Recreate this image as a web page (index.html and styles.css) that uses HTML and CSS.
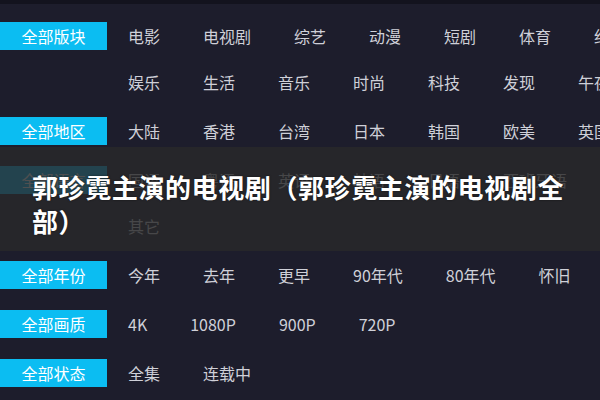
FILE: index.html
```html
<!DOCTYPE html>
<html lang="zh-CN">
<head>
<meta charset="utf-8">
<title>郭珍霓主演的电视剧</title>
<link rel="stylesheet" href="styles.css">
</head>
<body>
<div class="page">
  <div class="filters">
    <div class="group">
      <div class="label">全部版块</div>
      <div class="items">
        <div class="line"><span class="item">电影</span><span class="item">电视剧</span><span class="item">综艺</span><span class="item">动漫</span><span class="item">短剧</span><span class="item">体育</span><span class="item">纪录</span></div>
        <div class="line"><span class="item">娱乐</span><span class="item">生活</span><span class="item">音乐</span><span class="item">时尚</span><span class="item">科技</span><span class="item">发现</span><span class="item">午夜</span></div>
      </div>
    </div>
    <div class="group">
      <div class="label">全部地区</div>
      <div class="items">
        <div class="line"><span class="item">大陆</span><span class="item">香港</span><span class="item">台湾</span><span class="item">日本</span><span class="item">韩国</span><span class="item">欧美</span><span class="item">英国</span></div>
      </div>
    </div>
    <div class="group">
      <div class="label">全部语言</div>
      <div class="items">
        <div class="line"><span class="item">国语</span><span class="item">粤语</span><span class="item">英语</span><span class="item">韩语</span><span class="item">日语</span><span class="item">西班牙语</span></div>
        <div class="line"><span class="item">其它</span></div>
      </div>
    </div>
    <div class="group">
      <div class="label">全部年份</div>
      <div class="items">
        <div class="line"><span class="item">今年</span><span class="item">去年</span><span class="item">更早</span><span class="item">90年代</span><span class="item">80年代</span><span class="item">怀旧</span></div>
      </div>
    </div>
    <div class="group">
      <div class="label">全部画质</div>
      <div class="items">
        <div class="line"><span class="item">4K</span><span class="item">1080P</span><span class="item">900P</span><span class="item">720P</span></div>
      </div>
    </div>
    <div class="group">
      <div class="label">全部状态</div>
      <div class="items">
        <div class="line"><span class="item">全集</span><span class="item">连载中</span></div>
      </div>
    </div>
  </div>
  <div class="banner">
    <h1 class="title">郭珍霓主演的电视剧（郭珍霓主演的电视剧全部）</h1>
  </div>
</div>
</body>
</html>
```

FILE: styles.css
```css
* { box-sizing: border-box; }
html, body {
  margin: 0;
  padding: 0;
  width: 600px;
  height: 400px;
  overflow: hidden;
  background: #1d1d2c;
  font-family: "Noto Sans CJK SC", "Noto Sans", sans-serif;
}
.page {
  position: relative;
  width: 600px;
  height: 400px;
  border-top: 4px solid #13131e;
  overflow: hidden;
}
.filters {
  display: flex;
  flex-direction: column;
  gap: 3px;
  padding-top: 9px;
}
.group {
  display: flex;
  align-items: flex-start;
}
.label {
  flex: 0 0 107px;
  height: 28px;
  margin-top: 9px;
  margin-right: 21px;
  background: #0bbdf2;
  color: #ffffff;
  font-size: 16px;
  line-height: 28px;
  text-align: center;
}
.items {
  flex: 1;
  display: flex;
  flex-direction: column;
  min-width: 0;
}
.line {
  display: flex;
  white-space: nowrap;
}
.item {
  flex: 0 0 auto;
  height: 46px;
  line-height: 46px;
  margin-right: 43px;
  font-size: 16px;
  color: #cfd0d8;
}
.banner {
  position: absolute;
  left: 0;
  top: 143px;
  width: 600px;
  height: 104px;
  background: rgba(40, 40, 42, 0.82);
  padding: 23px 32px 0 32px;
}
.title {
  margin: 0;
  font-size: 26px;
  font-weight: 700;
  line-height: 34px;
  letter-spacing: 0.6px;
  color: #ffffff;
  text-shadow: 0 0 2px rgba(0, 0, 0, 0.6);
}
```
